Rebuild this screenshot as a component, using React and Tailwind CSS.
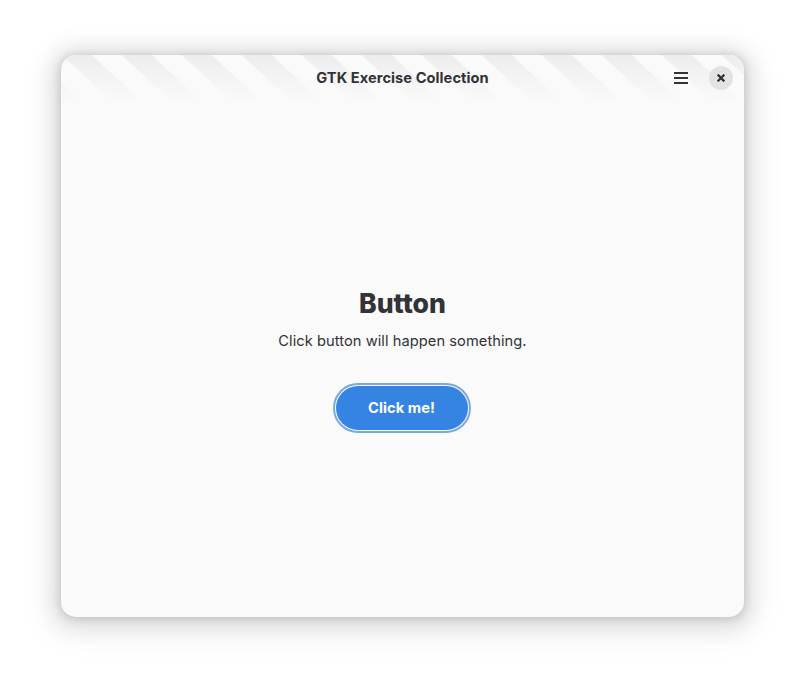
import React from "react";

function Stripes() {
  return (
    <svg className="absolute inset-0" width="683" height="47" viewBox="0 0 683 47">
      <defs>
        <linearGradient id="fade" x1="0" y1="0" x2="0" y2="47" gradientUnits="userSpaceOnUse">
          <stop offset="0" stopColor="#ededed" />
          <stop offset="1" stopColor="#fafafa" />
        </linearGradient>
      </defs>
      {Array.from({ length: 13 }, (_, i) => {
        const x = i * 60 - 59.3;
        return <polygon key={i} points={`${x},0 ${x + 30},0 ${x + 81},47 ${x + 51},47`} fill="url(#fade)" />;
      })}
    </svg>
  );
}

export default function App() {
  return (
    <div className="h-[684px] w-[805px] overflow-hidden bg-white pt-[55px] pl-[61px] font-['Inter',sans-serif] text-[#323237]">
      <div className="flex h-[562px] w-[683px] flex-col overflow-hidden rounded-[15px] bg-[#fafafa] shadow-[0_1px_8px_1px_rgba(0,0,0,0.14),0_3px_20px_10px_rgba(0,0,0,0.09),0_6px_32px_16px_rgba(0,0,0,0.04)]">
        <header className="relative grid h-[46px] shrink-0 grid-cols-[1fr_auto_1fr] items-center">
          <Stripes />
          <span />
          <h1 className="relative text-[14.67px] leading-5 font-bold tracking-[0.045px]">GTK Exercise Collection</h1>
          <div className="relative flex items-center justify-end gap-[21px] pr-[11px]">
            <button aria-label="Menu" className="flex h-6 w-[14px] items-center">
              <svg width="14" height="12" viewBox="0 0 14 12" fill="#323237">
                <path d="M0 0h14v2H0zM0 5h14v2H0zM0 10h14v2H0z" />
              </svg>
            </button>
            <button aria-label="Close" className="flex h-6 w-6 items-center justify-center rounded-full bg-[#e3e3e4]">
              <svg width="8" height="8" viewBox="0 0 8 8" fill="none" stroke="#323237" strokeWidth="2.2" strokeLinecap="square">
                <path d="M1.4 1.4l5.2 5.2M6.6 1.4L1.4 6.6" />
              </svg>
            </button>
          </div>
        </header>
        <main className="flex flex-1 flex-col items-center pt-[184px]">
          <h2 className="text-[26.6px] leading-9 font-extrabold [font-variation-settings:'opsz'_14]">Button</h2>
          <p className="mt-[10px] text-[14.67px] leading-5 tracking-[0.055px]">Click button will happen something.</p>
          <button className="mt-[35px] mr-px h-11 w-[132px] rounded-full bg-[#3584e4] pr-px text-[14.67px] font-bold tracking-[0.06px] text-white outline-2 outline-offset-1 outline-[#79aadf]">
            Click me!
          </button>
        </main>
      </div>
    </div>
  );
}
